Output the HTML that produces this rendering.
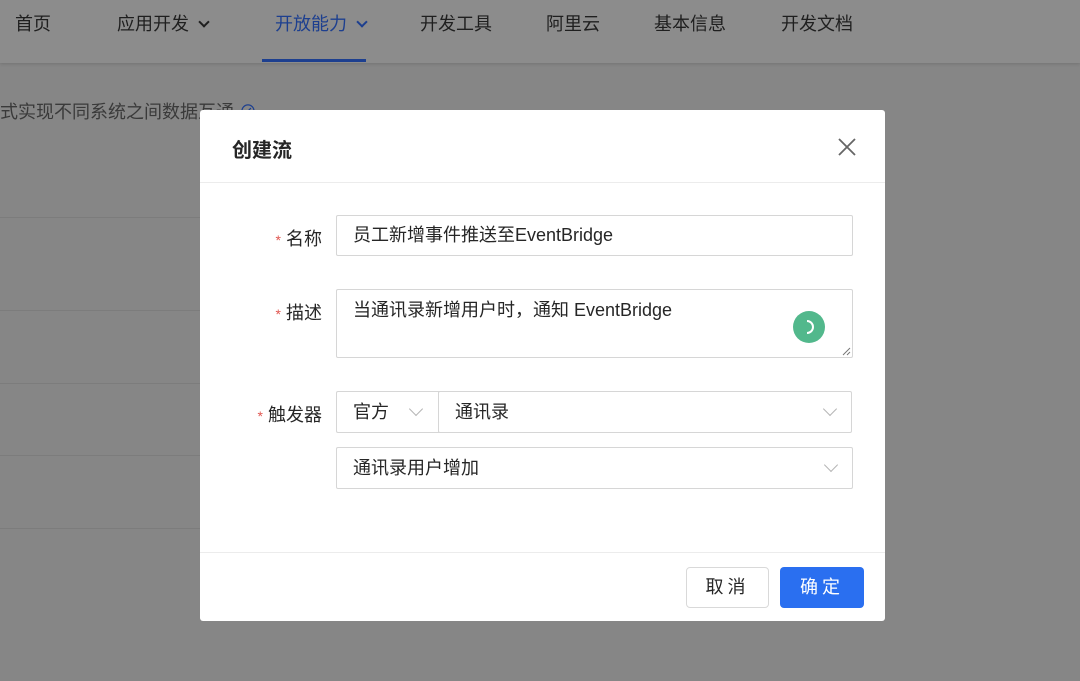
<!DOCTYPE html>
<html><head><meta charset="utf-8"><style>
*{box-sizing:border-box;margin:0;padding:0}
body{width:1080px;height:681px;overflow:hidden;background:#868686;font-family:"Liberation Sans","Noto Sans CJK SC",sans-serif;position:relative}
.nav{position:absolute;left:0;top:0;width:1080px;height:63px;background:#8c8c8c;box-shadow:0 1px 3px rgba(0,0,0,.15)}
.nav span{position:absolute;top:10px;font-size:18px;color:#1f1f1f}
.line{position:absolute;left:0;width:200px;height:1px;background:#7c7c7c}
.modal{position:absolute;left:200px;top:110px;width:685px;height:511px;background:#fff;border-radius:3px}
.abs{position:absolute}
.lbl{position:absolute;font-size:18px;color:#262626;text-align:right;width:120px}
.lbl i{color:#e0554f;font-style:normal;font-size:14px;margin-right:5px}
.box{position:absolute;border:1px solid #d6d6d6;border-radius:2px;font-size:18px;color:#262626;padding-left:16px}
.chev{position:absolute;width:10px;height:10px;border-right:1.3px solid #b5b5b5;border-bottom:1.3px solid #b5b5b5;transform:rotate(45deg)}
</style></head><body>
<div class="nav">
<span style="left:15px">首页</span>
<span style="left:117px">应用开发 <span style="position:relative;top:-4px;display:inline-block;width:8px;height:8px;border-right:2px solid #1f1f1f;border-bottom:2px solid #1f1f1f;transform:rotate(45deg);margin-left:6px"></span></span>
<span style="left:275px;color:#1d3f8f">开放能力 <span style="position:relative;top:-4px;display:inline-block;width:8px;height:8px;border-right:2px solid #1d3f8f;border-bottom:2px solid #1d3f8f;transform:rotate(45deg);margin-left:6px"></span></span>
<span style="left:420px">开发工具</span>
<span style="left:546px">阿里云</span>
<span style="left:654px">基本信息</span>
<span style="left:781px">开发文档</span>
<div class="abs" style="left:262px;top:59px;width:104px;height:3px;background:#1d3f8f"></div>
</div>
<div class="abs" style="left:0;top:98px;font-size:18px;color:#3a3a3a">式实现不同系统之间数据互通 <span style="color:#1d3f8f">⊘</span></div>
<div class="line" style="top:217px"></div><div class="line" style="top:310px"></div><div class="line" style="top:383px"></div><div class="line" style="top:455px"></div><div class="line" style="top:528px"></div>
<div class="modal">
<div class="abs" style="left:32px;top:24px;font-size:20px;font-weight:bold;color:#262626">创建流</div>
<div class="abs" style="left:638px;top:28px;width:18px;height:18px">
<svg width="18" height="18"><path d="M1 1L17 17M17 1L1 17" stroke="#666" stroke-width="1.8"/></svg></div>
<div class="abs" style="left:0;top:72px;width:685px;height:1px;background:#ececec"></div>
<div class="lbl" style="left:2px;top:115px"><i>*</i>名称</div>
<div class="box" style="left:136px;top:105px;width:517px;height:41px;line-height:39px">员工新增事件推送至EventBridge</div>
<div class="lbl" style="left:2px;top:189px"><i>*</i>描述</div>
<div class="box" style="left:136px;top:179px;width:517px;height:69px;padding-top:8px;line-height:24px">当通讯录新增用户时，通知 EventBridge
<div class="abs" style="left:456px;top:21px;width:32px;height:32px;border-radius:50%;background:#52b88c"><svg width="32" height="32"><path d="M14 10A6 6 0 0 1 14 22" fill="none" stroke="#fff" stroke-width="2"/></svg></div>
<svg class="abs" style="right:1px;bottom:1px" width="10" height="10"><path d="M9 2L2 9M9 6L6 9" stroke="#777"/></svg>
</div>
<div class="lbl" style="left:2px;top:291px"><i>*</i>触发器</div>
<div class="box" style="left:136px;top:281px;width:104px;height:42px;line-height:40px;border-right:none;border-radius:2px 0 0 2px">官方<div class="chev" style="left:74px;top:12px"></div></div>
<div class="box" style="left:238px;top:281px;width:414px;height:42px;line-height:40px">通讯录<div class="chev" style="left:386px;top:12px"></div></div>
<div class="box" style="left:136px;top:337px;width:517px;height:42px;line-height:40px">通讯录用户增加<div class="chev" style="left:489px;top:12px"></div></div>
<div class="abs" style="left:0;top:442px;width:685px;height:1px;background:#ececec"></div>
<div class="abs" style="left:486px;top:457px;width:83px;height:41px;border:1px solid #d9d9d9;border-radius:4px;text-align:center;line-height:39px;font-size:18px;color:#262626;letter-spacing:4px">取消</div>
<div class="abs" style="left:580px;top:457px;width:84px;height:41px;background:#2a6ff0;border-radius:4px;text-align:center;line-height:41px;font-size:18px;color:#fff;letter-spacing:4px">确定</div>
</div>
</body></html>
